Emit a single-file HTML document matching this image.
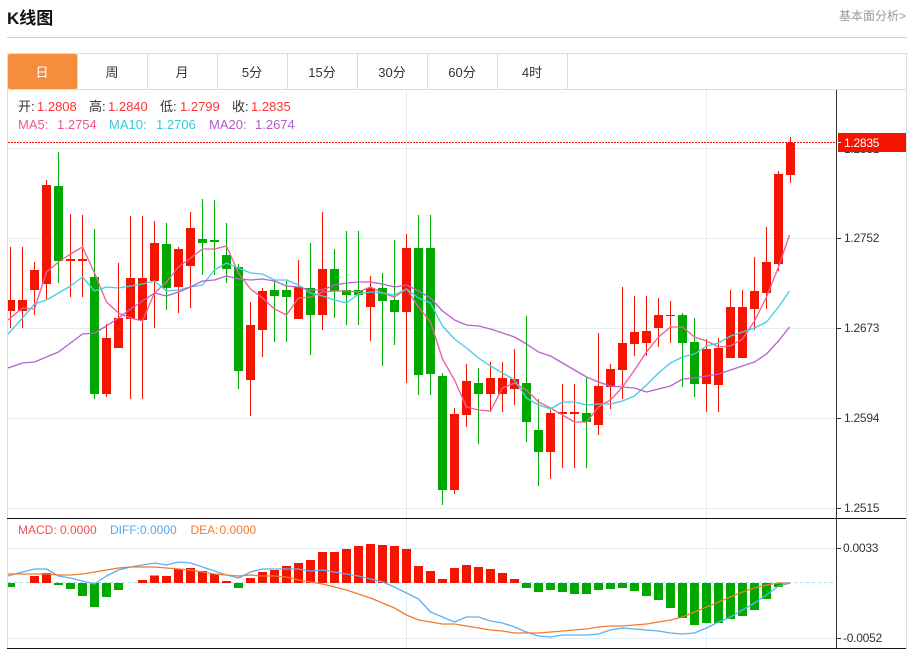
<!DOCTYPE html>
<html lang="zh">
<head>
<meta charset="utf-8">
<title>K线图</title>
<style>
html,body{margin:0;padding:0;background:#fff;width:912px;height:649px;overflow:hidden}
svg{display:block;position:absolute;left:0;top:0}
text{font-family:"Liberation Sans","Noto Sans CJK SC",sans-serif}
</style>
</head>
<body>
<svg width="912" height="649" viewBox="0 0 912 649" xmlns="http://www.w3.org/2000/svg">
<defs><clipPath id="c"><rect x="8" y="90" width="828" height="558"/></clipPath></defs>
<text x="7" y="24" font-size="17" font-weight="700" fill="#111">K线图</text>
<text x="839" y="20" font-size="12" fill="#999">基本面分析&gt;</text>
<path d="M7 37.5H907" stroke="#cfcfcf" fill="none"/>

<rect x="7.5" y="53.5" width="899" height="595" fill="#fff" stroke="#dcdfe1"/>
<path d="M8 89.5H906M77.5 54V89M147.5 54V89M217.5 54V89M287.5 54V89M357.5 54V89M427.5 54V89M497.5 54V89M567.5 54V89" stroke="#d9dcde" fill="none"/>
<rect x="8" y="54" width="69" height="35" rx="2" fill="#f58d3f"/>
<g font-size="13" fill="#333" text-anchor="middle">
<text x="42" y="77" fill="#fff">日</text>
<text x="112" y="77">周</text>
<text x="182" y="77">月</text>
<text x="252" y="77">5分</text>
<text x="322" y="77">15分</text>
<text x="392" y="77">30分</text>
<text x="462" y="77">60分</text>
<text x="532" y="77">4时</text>
</g>

<path d="M8 148.5H836M8 238.5H836M8 328.5H836M8 418.5H836M8 508.5H836M8 548.5H836M8 638.5H836M406.5 90V648M706.5 90V648" stroke="#e3edf3" fill="none"/>

<g clip-path="url(#c)">
<path fill="#f41400" d="M10 247h1v81h-1zM6 300h9v11H6zM22 247h1v81h-1zM18 300h9v11h-9zM34 262h1v53h-1zM30 270h9v20h-9zM46 180h1v119h-1zM42 185h9v99h-9zM70 214h1v83h-1zM66 259h9v2h-9zM82 215h1v82h-1zM78 259h9v2h-9zM106 324h1v73h-1zM102 338h9v56h-9zM118 263h1v85h-1zM114 318h9v30h-9zM130 216h1v183h-1zM126 278h9v41h-9zM142 216h1v183h-1zM138 278h9v42h-9zM154 221h1v107h-1zM150 243h9v38h-9zM178 247h1v66h-1zM174 249h9v38h-9zM190 212h1v96h-1zM186 228h9v38h-9zM250 302h1v114h-1zM246 325h9v55h-9zM262 288h1v69h-1zM258 291h9v39h-9zM298 260h1v59h-1zM294 287h9v32h-9zM322 212h1v118h-1zM318 269h9v46h-9zM370 276h1v65h-1zM366 288h9v19h-9zM406 234h1v149h-1zM402 248h9v64h-9zM454 408h1v86h-1zM450 414h9v76h-9zM466 364h1v63h-1zM462 381h9v34h-9zM490 362h1v50h-1zM486 378h9v16h-9zM502 362h1v50h-1zM498 378h9v16h-9zM514 349h1v56h-1zM510 379h9v10h-9zM550 410h1v69h-1zM546 413h9v39h-9zM562 384h1v84h-1zM558 412h9v2h-9zM574 384h1v84h-1zM570 412h9v2h-9zM598 333h1v102h-1zM594 386h9v39h-9zM610 364h1v45h-1zM606 369h9v18h-9zM622 287h1v112h-1zM618 343h9v27h-9zM634 296h1v60h-1zM630 332h9v12h-9zM646 296h1v60h-1zM642 331h9v12h-9zM658 298h1v49h-1zM654 315h9v13h-9zM670 301h1v42h-1zM666 315h9v1h-9zM706 339h1v73h-1zM702 349h9v35h-9zM718 338h1v74h-1zM714 348h9v37h-9zM730 290h1v68h-1zM726 307h9v51h-9zM742 290h1v68h-1zM738 307h9v51h-9zM754 257h1v73h-1zM750 291h9v18h-9zM766 227h1v82h-1zM762 262h9v31h-9zM778 171h1v100h-1zM774 174h9v90h-9zM790 137h1v46h-1zM786 143h9v32h-9z"/>
<path fill="#00a800" d="M58 152h1v131h-1zM54 186h9v75h-9zM94 229h1v170h-1zM90 277h9v117h-9zM166 223h1v87h-1zM162 244h9v44h-9zM202 199h1v76h-1zM198 239h9v4h-9zM214 200h1v75h-1zM210 240h9v2h-9zM226 223h1v60h-1zM222 255h9v14h-9zM238 264h1v125h-1zM234 267h9v104h-9zM274 280h1v62h-1zM270 290h9v6h-9zM286 281h1v61h-1zM282 290h9v7h-9zM310 243h1v112h-1zM306 288h9v27h-9zM334 249h1v69h-1zM330 269h9v22h-9zM346 231h1v94h-1zM342 290h9v5h-9zM358 231h1v94h-1zM354 290h9v5h-9zM382 273h1v93h-1zM378 288h9v13h-9zM394 240h1v105h-1zM390 300h9v12h-9zM418 215h1v180h-1zM414 248h9v127h-9zM430 215h1v180h-1zM426 248h9v126h-9zM442 373h1v132h-1zM438 376h9v114h-9zM478 368h1v76h-1zM474 383h9v11h-9zM526 316h1v126h-1zM522 383h9v39h-9zM538 399h1v87h-1zM534 430h9v22h-9zM586 378h1v90h-1zM582 413h9v9h-9zM682 313h1v74h-1zM678 315h9v28h-9zM694 318h1v79h-1zM690 342h9v42h-9z"/>
<g fill="none" stroke-width="1.35" stroke-linejoin="round">
<polyline stroke="#f0609a" points="8,320 22.5,308 34.5,309 46.5,272 58.5,262 70.5,254 82.5,247 94.5,273 106.5,302 118.5,313 130.5,318 142.5,321 154.5,293 166.5,282 178.5,267 190.5,258 202.5,249 214.5,249 226.5,246 238.5,273 250.5,289 262.5,298 274.5,309 286.5,315 298.5,298 310.5,297 322.5,292 334.5,291 346.5,291 358.5,292 370.5,287 382.5,293 394.5,297 406.5,289 418.5,307 430.5,322 442.5,359 454.5,380 466.5,407 478.5,410 490.5,411 502.5,388 514.5,383 526.5,390 538.5,402 550.5,408 562.5,415 574.5,422 586.5,422 598.5,407 610.5,400 622.5,387 634.5,370 646.5,352 658.5,337 670.5,327 682.5,327 694.5,337 706.5,341 718.5,347 730.5,346 742.5,339 754.5,321 766.5,297 778.5,267 789.5,235"/>
<polyline stroke="#45cfe0" points="8,334 22.5,318 34.5,304 46.5,300 58.5,293 70.5,286 82.5,277 94.5,291 106.5,287 118.5,288 130.5,286 142.5,284 154.5,281 166.5,291 178.5,290 190.5,287 202.5,285 214.5,270 226.5,263 238.5,268 250.5,273 262.5,274 274.5,280 286.5,280 298.5,285 310.5,293 322.5,296 334.5,300 346.5,303 358.5,294 370.5,292 382.5,293 394.5,295 406.5,289 418.5,298 430.5,303 442.5,326 454.5,339 466.5,348 478.5,358 490.5,366 502.5,373 514.5,380 526.5,398 538.5,405 550.5,409 562.5,402 574.5,402 586.5,405 598.5,404 610.5,404 622.5,401 634.5,396 646.5,385 658.5,373 670.5,363 682.5,357 694.5,354 706.5,346 718.5,343 730.5,336 742.5,332 754.5,328 766.5,322 778.5,307 789.5,291"/>
<polyline stroke="#b862cf" points="8,368 22.5,363 34.5,362 46.5,357 58.5,352 70.5,343 82.5,334 94.5,333 106.5,326 118.5,318 130.5,309 142.5,301 154.5,293 166.5,296 178.5,292 190.5,287 202.5,281 214.5,280 226.5,276 238.5,279 250.5,280 262.5,279 274.5,281 286.5,286 298.5,287 310.5,290 322.5,290 334.5,285 346.5,283 358.5,282 370.5,282 382.5,284 394.5,287 406.5,285 418.5,291 430.5,298 442.5,311 454.5,320 466.5,325 478.5,326 490.5,329 502.5,333 514.5,337 526.5,344 538.5,352 550.5,356 562.5,363 574.5,370 586.5,377 598.5,382 610.5,386 622.5,387 634.5,388 646.5,392 658.5,389 670.5,386 682.5,379 694.5,378 706.5,376 718.5,374 730.5,370 742.5,366 754.5,362 766.5,354 778.5,341 789.5,327"/>
</g>
<path d="M8 142.5H836" stroke="#f01010" stroke-dasharray="2 1" fill="none"/>

<path d="M8 582.5H836" stroke="#a8dcea" stroke-dasharray="3 3" fill="none"/>
<path fill="#f41400" d="M30 576h9v7h-9zM42 573h9v10h-9zM138 580h9v3h-9zM150 575.500h9v7.500h-9zM162 576h9v7h-9zM174 569h9v14h-9zM186 568h9v15h-9zM198 571h9v12h-9zM210 574h9v9h-9zM222 581h9v2h-9zM246 578h9v5h-9zM258 572h9v11h-9zM270 570h9v13h-9zM282 566h9v17h-9zM294 563h9v20h-9zM306 560h9v23h-9zM318 552h9v31h-9zM330 552h9v31h-9zM342 549h9v34h-9zM354 546h9v37h-9zM366 544h9v39h-9zM378 545h9v38h-9zM390 546h9v37h-9zM402 549h9v34h-9zM414 566h9v17h-9zM426 571h9v12h-9zM438 579h9v4h-9zM450 568h9v15h-9zM462 565h9v18h-9zM474 567h9v16h-9zM486 569h9v14h-9zM498 573h9v10h-9zM510 579h9v4h-9z"/>
<path fill="#00a800" d="M6 583h9v4H6zM54 583h9v2h-9zM66 583h9v6h-9zM78 583h9v13h-9zM90 583h9v24h-9zM102 583h9v14h-9zM114 583h9v7h-9zM234 583h9v5h-9zM522 583h9v5h-9zM534 583h9v9h-9zM546 583h9v7h-9zM558 583h9v9h-9zM570 583h9v11h-9zM582 583h9v11h-9zM594 583h9v7h-9zM606 583h9v6h-9zM618 583h9v5h-9zM630 583h9v8h-9zM642 583h9v13h-9zM654 583h9v17h-9zM666 583h9v25h-9zM678 583h9v35h-9zM690 583h9v42h-9zM702 583h9v40h-9zM714 583h9v40h-9zM726 583h9v36h-9zM738 583h9v33h-9zM750 583h9v27h-9zM762 583h9v16h-9zM774 583h9v4h-9z"/>
<g fill="none" stroke-width="1.35" stroke-linejoin="round">
<polyline stroke="#5eb0f5" points="8,576 22.500,572 34.500,569 46.500,569 58.500,576 70.500,578 82.500,581 94.500,584 106.500,576 118.500,570 130.500,567 142.500,565 154.500,563 166.500,565 178.500,562 190.500,563 202.500,567 214.500,571 226.500,575 238.500,578 250.500,572 262.500,569 274.500,569 286.500,569 298.500,569 310.500,571 322.500,570 334.500,572 346.500,574 358.500,576 370.500,579 382.500,582 394.500,587 406.500,593 418.500,599 430.500,612 442.500,617 454.500,622 466.500,617 478.500,617 490.500,621 502.500,623 514.500,627 526.500,632 538.500,636 550.500,637 562.500,635 574.500,635 586.500,635 598.500,634 610.500,630 622.500,628 634.500,629 646.500,630 658.500,631 670.500,633 682.500,634 694.500,633 706.500,628 718.500,622 730.500,617 742.500,610 754.500,603 766.500,595 778.500,586 790.500,583"/>
<polyline stroke="#f37b2e" points="8,574 22.500,574 34.500,574 46.500,574 58.500,575 70.500,575 82.500,574 94.500,572 106.500,570 118.500,568 130.500,567 142.500,567 154.500,567 166.500,568 178.500,569 190.500,570 202.500,572 214.500,574 226.500,575 238.500,576 250.500,575 262.500,576 274.500,576 286.500,577 298.500,580 310.500,582 322.500,584 334.500,587 346.500,590 358.500,594 370.500,598 382.500,603 394.500,608 406.500,615 418.500,620 430.500,622 442.500,624 454.500,624 466.500,626 478.500,628 490.500,630 502.500,631 514.500,633 526.500,633 538.500,633 550.500,632 562.500,631 574.500,630 586.500,629 598.500,627 610.500,626 622.500,626 634.500,625 646.500,624 658.500,622 670.500,620 682.500,617 694.500,612 706.500,607 718.500,602 730.500,597 742.500,592 754.500,588 766.500,585 778.500,583 790.500,583"/>
</g>
</g>

<path d="M7 518.500H906M7 648.500H906" stroke="#111" fill="none"/>
<path d="M836.500 90V648" stroke="#333" fill="none"/>
<path d="M837 238.500h4M837 328.500h4M837 418.500h4M837 508.500h4M837 548.500h4M837 638.500h4" stroke="#333" fill="none"/>

<g font-size="12" fill="#333" letter-spacing="-.25">
<text x="844" y="153">1.2831</text>
<text x="844" y="242">1.2752</text>
<text x="844" y="332">1.2673</text>
<text x="844" y="422">1.2594</text>
<text x="844" y="512">1.2515</text>
<text x="843" y="552">0.0033</text>
<text x="843" y="642">-0.0052</text>
</g>
<rect x="838" y="133" width="68" height="19" fill="#f41400"/>
<path d="M838 142.500h3" stroke="#fff" fill="none"/>
<text x="844" y="147" font-size="12" fill="#fff" letter-spacing="-.25">1.2835</text>

<g font-size="13">
<text x="18" y="111" fill="#333">开:</text><text x="37" y="111" fill="#f33">1.2808</text>
<text x="89" y="111" fill="#333">高:</text><text x="108" y="111" fill="#f33">1.2840</text>
<text x="160" y="111" fill="#333">低:</text><text x="180" y="111" fill="#f33">1.2799</text>
<text x="232" y="111" fill="#333">收:</text><text x="251" y="111" fill="#f33">1.2835</text>
<text x="18" y="129" fill="#eb5a92">MA5:</text><text x="57" y="129" fill="#eb5a92">1.2754</text>
<text x="109" y="129" fill="#3cc8dd">MA10:</text><text x="156" y="129" fill="#3cc8dd">1.2706</text>
<text x="209" y="129" fill="#b45ccc">MA20:</text><text x="255" y="129" fill="#b45ccc">1.2674</text>
</g>
<g font-size="12">
<text x="18" y="534" fill="#f25050">MACD:</text><text x="60" y="534" fill="#f25050">0.0000</text>
<text x="110" y="534" fill="#55a9ef">DIFF:</text><text x="140" y="534" fill="#55a9ef">0.0000</text>
<text x="190.500" y="534" fill="#f37b2e">DEA:</text><text x="219.500" y="534" fill="#f37b2e">0.0000</text>
</g>
</svg>
</body>
</html>
